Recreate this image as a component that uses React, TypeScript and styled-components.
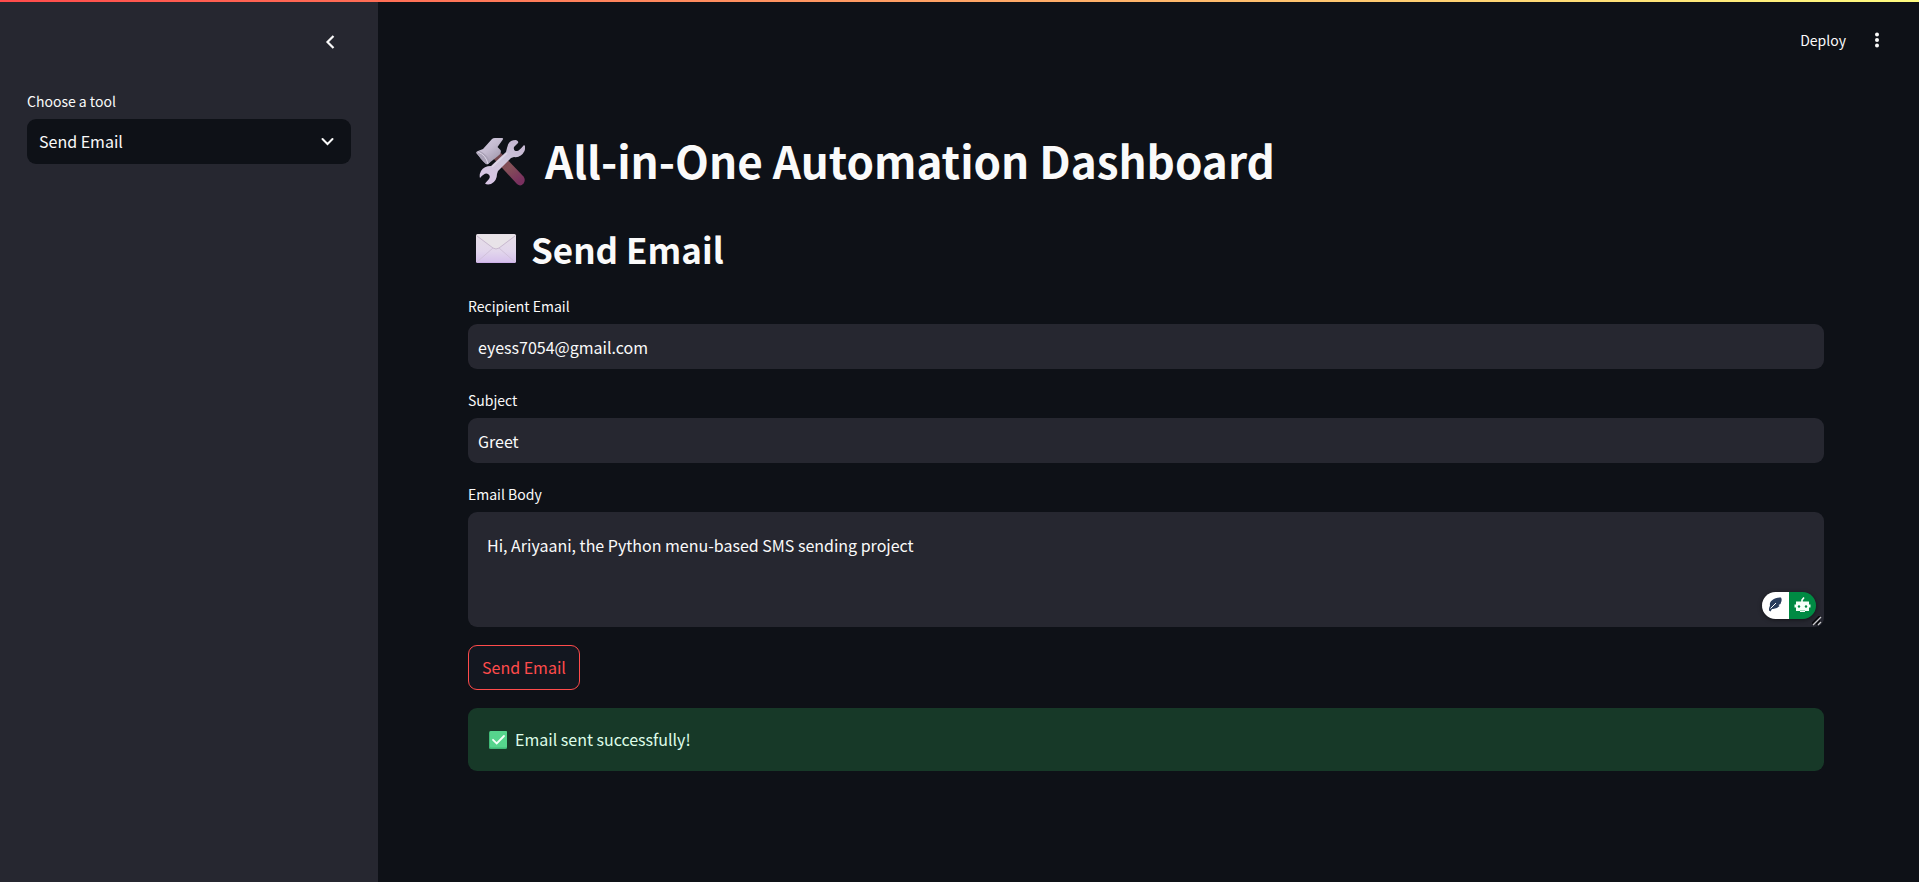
import React, { useState } from "react";
import styled, { createGlobalStyle } from "styled-components";

const GlobalStyle = createGlobalStyle`
  *, *::before, *::after { box-sizing: border-box; }
  body {
    margin: 0;
    background: #0e1117;
    color: #fafafa;
    color-scheme: dark;
    font-family: "Noto Sans CJK SC", "Noto Sans", sans-serif;
    font-size: 16px;
    line-height: 27px;
  }
  button, input, select, textarea { font: inherit; color: inherit; }
`;

const Page = styled.div`
  display: flex;
  min-height: 100vh;
`;

const Decoration = styled.div`
  position: fixed;
  inset: 0 0 auto;
  height: 2px;
  z-index: 2;
  background: linear-gradient(90deg, #ff4b4b, #fffd80);
`;

const Sidebar = styled.aside`
  flex: 0 0 378px;
  padding: 24px 27px;
  background: #262730;
`;

const SidebarHeader = styled.div`
  display: flex;
  justify-content: flex-end;
  height: 64px;
  padding-right: 8px;
`;

const IconButton = styled.button`
  display: grid;
  place-items: center;
  width: 26px;
  height: 36px;
  padding: 0;
  border: 0;
  background: transparent;
  cursor: pointer;
`;

const Main = styled.div`
  flex: 1;
  min-width: 0;
`;

const Toolbar = styled.header`
  display: flex;
  align-items: center;
  justify-content: flex-end;
  gap: 18px;
  height: 80px;
  padding: 0 29px;
`;

const DeployButton = styled.button`
  padding: 0;
  border: 0;
  background: transparent;
  font-size: 14px;
  line-height: 27px;
  cursor: pointer;
`;

const Content = styled.main`
  display: flex;
  flex-direction: column;
  gap: 18px;
  padding: 50px 95px 90px 90px;
`;

const Title = styled.h1`
  display: flex;
  align-items: center;
  gap: 20px;
  margin: 0;
  padding-left: 8px;
  font-size: 44px;
  font-weight: 700;
  line-height: 60px;
`;

const SectionTitle = styled.h2`
  display: flex;
  align-items: center;
  gap: 14px;
  margin: 0;
  padding: 17px 0 2px 8px;
  font-size: 35px;
  font-weight: 600;
  line-height: 48px;
`;

const Field = styled.div`
  display: flex;
  flex-direction: column;
  gap: 4px;
`;

const Label = styled.label`
  font-size: 14px;
  line-height: 27px;
`;

const TextInput = styled.input`
  width: 100%;
  height: 45px;
  padding: 0 10px;
  border: 0;
  border-radius: 9px;
  outline: 0;
  background: #262730;
`;

const TextAreaFrame = styled.div`
  position: relative;
  display: flex;
`;

const TextArea = styled.textarea`
  width: 100%;
  height: 115px;
  padding: 20px 19px;
  border: 0;
  border-radius: 9px;
  outline: 0;
  background: #262730;
  resize: vertical;

  &::-webkit-resizer {
    background: transparent;
  }
`;

const ResizeGrip = styled.svg`
  position: absolute;
  right: 2px;
  bottom: 1px;
  pointer-events: none;
`;

const AssistantPill = styled.div`
  position: absolute;
  right: 8px;
  bottom: 8px;
  display: flex;
  height: 27px;
  border-radius: 14px;
  overflow: hidden;
  box-shadow: 0 1px 4px rgba(0, 0, 0, 0.5);
`;

const PillButton = styled.button<{ $fill: string }>`
  display: grid;
  place-items: center;
  width: 27px;
  height: 27px;
  padding: 0;
  border: 0;
  background: ${(p) => p.$fill};
  cursor: pointer;
`;

const SelectFrame = styled.div`
  position: relative;
  display: flex;

  svg {
    position: absolute;
    right: 17px;
    top: 14px;
    pointer-events: none;
  }
`;

const Select = styled.select`
  appearance: none;
  width: 100%;
  height: 45px;
  padding: 0 40px 0 12px;
  border: 0;
  border-radius: 9px;
  outline: 0;
  background: #0e1117;
`;

const SubmitButton = styled.button`
  align-self: flex-start;
  height: 45px;
  padding: 0 13px;
  border: 1px solid #ff4b4b;
  border-radius: 9px;
  background: #131720;
  color: #ff4b4b;
  cursor: pointer;
`;

const Alert = styled.div`
  display: flex;
  align-items: center;
  gap: 8px;
  padding: 18px 21px;
  border-radius: 9px;
  background: #173928;
  color: #dffde9;
`;

const ToolsIcon = () => (
  <svg width="49" height="52" viewBox="0 -4 49 52" aria-hidden="true">
    <defs>
      <linearGradient id="handle" x1="0" y1="0" x2="0.7" y2="1">
        <stop offset="0" stopColor="#6b4146" />
        <stop offset="0.55" stopColor="#855058" />
        <stop offset="1" stopColor="#79305f" />
      </linearGradient>
      <linearGradient id="head" x1="0" y1="0" x2="0.8" y2="1">
        <stop offset="0" stopColor="#d9d0e6" />
        <stop offset="0.5" stopColor="#c4bbd0" />
        <stop offset="1" stopColor="#9a92a6" />
      </linearGradient>
      <linearGradient id="steel" x1="0.8" y1="0" x2="0.3" y2="1">
        <stop offset="0" stopColor="#c4b6d1" />
        <stop offset="0.5" stopColor="#cfc7db" />
        <stop offset="1" stopColor="#d8c5e5" />
      </linearGradient>
    </defs>
    <path d="M17 20 24 14 47.5 38.5Q50 42 47.5 45.5 44.5 49 41 46Z" fill="url(#handle)" />
    <path d="M16 1Q17 0 19 0H26Q28 0 26.5 2L21.5 9 24.500 12Q26 15 22 18L12 26Q10 27 8 24L1 16Q-1 14 2 13L7 11Z" fill="url(#head)" />
    <path d="M1 14 4 13Q12 17 14 24L11 26.500Q4 22 1 14Z" fill="#aaa2b7" />
    <path d="M2 14Q10 17 12 26" fill="none" stroke="#ded7e8" strokeWidth="1" />
    <path d="M40 2Q43 3 42 5L38 9Q37 13 41 13 43 13 48 7 50 8 48.500 13 45 20 38 19L35 20 22 33 21 36Q21 43 15 46 11 47 9 45.500L13 41Q15 38 12 36 9 34 4 40 3 37 5 33 8 28 15 28L30 14 31 10Q32 2 40 2Z" fill="url(#steel)" />
    <path d="m16 29 15-14" stroke="#eee8f3" strokeWidth="1.500" opacity="0.5" />
  </svg>
);

const EnvelopeIcon = () => (
  <svg width="41" height="30" viewBox="0 0 41 30" aria-hidden="true">
    <defs>
      <linearGradient id="paper" x1="0" y1="0" x2="0" y2="1">
        <stop offset="0" stopColor="#e6dfe6" />
        <stop offset="0.6" stopColor="#e2d6ec" />
        <stop offset="1" stopColor="#d5bfec" />
      </linearGradient>
    </defs>
    <rect width="40" height="29" rx="1.500" fill="url(#paper)" />
    <path d="M1 1 17 14Q20 16 23 14L39 1Z" fill="#e8e3e8" />
    <path d="M1 2 17 14Q20 16 23 14L39 2" fill="none" stroke="#c8b9cf" strokeWidth="1" />
    <path d="M1 28 17 14M39 28 23 14" stroke="#d0c1d9" strokeWidth="1" />
    <path d="M1 28.500H39" stroke="#ccb0e8" strokeWidth="1" />
  </svg>
);

const CheckIcon = () => (
  <svg width="18" height="18" viewBox="0 0 18 18" aria-hidden="true">
    <rect width="18" height="18" rx="1.500" fill="#40b977" />
    <rect x="1" width="17" height="16.500" rx="1" fill="#56d58d" />
    <path d="m4 8.800 3.700 3.700L15 5" fill="none" stroke="#f5fff8" strokeWidth="1.800" strokeLinecap="round" />
  </svg>
);

const FeatherIcon = () => (
  <svg width="15" height="19" viewBox="0 0 15 19" aria-hidden="true">
    <path d="M2 9.500C1 6 5 1.500 13 1.500 14.500 4 13 6.500 12.500 8L10.500 9 11.500 10Q8.500 13.500 4 13L2.500 15.500 1 14.500Q.8 12 2 9.500Z" fill="#293d5c" />
    <path d="M2.500 12.500 8 7" stroke="#fff" strokeWidth="1" />
  </svg>
);

const RobotIcon = () => (
  <svg width="17" height="19" viewBox="0 0 17 19" aria-hidden="true">
    <path d="M8 6V4L10 1.500" fill="none" stroke="#fff" strokeWidth="1.600" />
    <path d="M2 5.500H15V8.500H16.500V11.500H15V15H11V16H6V15H2V11.500H.5V8.500H2Z" fill="#f4fff8" />
    <circle cx="5" cy="10.500" r="1.200" fill="#008a43" />
    <circle cx="12" cy="10.500" r="1.200" fill="#008a43" />
    <path d="M6 14.500H11" stroke="#a5dabd" strokeWidth="1" />
  </svg>
);

const ChevronLeft = () => (
  <svg width="10" height="14" viewBox="0 0 10 14" aria-hidden="true">
    <path d="M8.500 1 2.500 7 8.500 13" fill="none" stroke="#fafafa" strokeWidth="2.200" />
  </svg>
);

const ChevronDown = () => (
  <svg width="14" height="16" viewBox="0 0 14 16" aria-hidden="true">
    <path d="M2.500 6 7.500 11 12.500 6" fill="none" stroke="#fafafa" strokeWidth="2" strokeLinecap="round" />
  </svg>
);

const MoreIcon = () => (
  <svg width="6" height="18" viewBox="0 0 6 18" fill="#fafafa" aria-hidden="true">
    <circle cx="3" cy="3.500" r="2" />
    <circle cx="3" cy="9" r="2" />
    <circle cx="3" cy="14.500" r="2" />
  </svg>
);

export default function App() {
  const [recipient, setRecipient] = useState("eyess7054@gmail.com");
  const [subject, setSubject] = useState("Greet");
  const [body, setBody] = useState("Hi, Ariyaani, the Python menu-based SMS sending project");

  return (
    <>
      <GlobalStyle />
      <Decoration />
      <Page>
        <Sidebar>
          <SidebarHeader>
            <IconButton type="button" aria-label="Collapse sidebar"><ChevronLeft /></IconButton>
          </SidebarHeader>
          <Field>
            <Label htmlFor="tool">Choose a tool</Label>
            <SelectFrame>
              <Select id="tool" defaultValue="email">
                <option value="email">Send Email</option>
              </Select>
              <ChevronDown />
            </SelectFrame>
          </Field>
        </Sidebar>
        <Main>
          <Toolbar>
            <DeployButton type="button">Deploy</DeployButton>
            <IconButton type="button" aria-label="Main menu"><MoreIcon /></IconButton>
          </Toolbar>
          <Content>
            <Title><ToolsIcon />All-in-One Automation Dashboard</Title>
            <SectionTitle><EnvelopeIcon />Send Email</SectionTitle>
            <Field>
              <Label htmlFor="recipient">Recipient Email</Label>
              <TextInput id="recipient" value={recipient} onChange={(e) => setRecipient(e.target.value)} />
            </Field>
            <Field>
              <Label htmlFor="subject">Subject</Label>
              <TextInput id="subject" value={subject} onChange={(e) => setSubject(e.target.value)} />
            </Field>
            <Field>
              <Label htmlFor="body">Email Body</Label>
              <TextAreaFrame>
                <TextArea id="body" spellCheck={false} value={body} onChange={(e) => setBody(e.target.value)} />
                <ResizeGrip width="10" height="10" viewBox="0 0 10 10" aria-hidden="true">
                  <path d="M0 8 8 0M4 8.500 8 4.500" stroke="#08090c" strokeWidth="2" />
                  <path d="M1 9 9 1M6 9 9 6" stroke="#c9c9cc" strokeWidth="1.300" />
                </ResizeGrip>
                <AssistantPill>
                  <PillButton type="button" $fill="#ffffff" aria-label="Rephrase"><FeatherIcon /></PillButton>
                  <PillButton type="button" $fill="#008a43" aria-label="Writing assistant"><RobotIcon /></PillButton>
                </AssistantPill>
              </TextAreaFrame>
            </Field>
            <SubmitButton type="button">Send Email</SubmitButton>
            <Alert role="status"><CheckIcon />Email sent successfully!</Alert>
          </Content>
        </Main>
      </Page>
    </>
  );
}
